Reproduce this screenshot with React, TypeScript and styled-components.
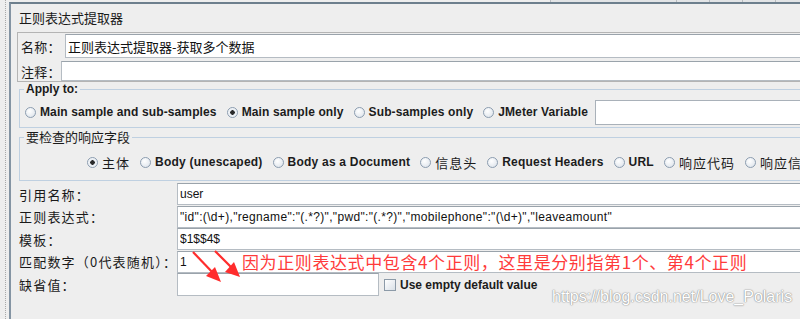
import React from 'react';
import styled, { createGlobalStyle } from 'styled-components';

const GlobalStyle = createGlobalStyle`
html, body {
    margin: 0;
    padding: 0;
    background: #eeeeee;
}
body {
    font-family: "Liberation Sans", Arial, "Noto Sans CJK SC", sans-serif;
    color: #1c1c1c;
}
`;

const cjk = `"Noto Sans CJK SC", "Liberation Sans", sans-serif`;

const applyOptions = [
    { label: 'Main sample and sub-samples', checked: false },
    { label: 'Main sample only', checked: true },
    { label: 'Sub-samples only', checked: false },
    { label: 'JMeter Variable', checked: false },
];

const fieldOptions = [
    { label: '主体', checked: true, cn: true },
    { label: 'Body (unescaped)', checked: false },
    { label: 'Body as a Document', checked: false },
    { label: '信息头', checked: false, cn: true },
    { label: 'Request Headers', checked: false },
    { label: 'URL', checked: false },
    { label: '响应代码', checked: false, cn: true },
    { label: '响应信息', checked: false, cn: true },
];

const RegexExtractor: React.FC = () => {
    return <Page>
        <GlobalStyle />
        <Gutter />
        <Main>
            <TopStrip>
                <Tab $w={125} />
                <Tab $w={32} />
                <Tab $w={32} />
                <Tab $w={32} />
                <Tab $w={40} />
            </TopStrip>
            <Panel>
                <Title>正则表达式提取器</Title>
                <NameBox>
                    <NameRow $h={24}>
                        <NameLabel $w={47}>名称：</NameLabel>
                        <TextInput $cn readOnly defaultValue="正则表达式提取器-获取多个数据" />
                    </NameRow>
                    <NameRow $h={20}>
                        <NameLabel $w={43}>注释：</NameLabel>
                        <TextInput readOnly defaultValue="" />
                    </NameRow>
                </NameBox>

                <Group>
                    <Legend>Apply to:</Legend>
                    <RadioRow $h={26}>
                        {applyOptions.map(o => (
                            <RadioItem key={o.label}>
                                <Radio $checked={o.checked} />
                                <RadioText>{o.label}</RadioText>
                            </RadioItem>
                        ))}
                        <VarInput readOnly defaultValue="" />
                    </RadioRow>
                </Group>

                <Group $second>
                    <Legend $cn>要检查的响应字段</Legend>
                    <RadioRow $h={22} $indent={62}>
                        {fieldOptions.map(o => (
                            <RadioItem key={o.label}>
                                <Radio $checked={o.checked} />
                                <RadioText $cn={o.cn} $wide>{o.label}</RadioText>
                            </RadioItem>
                        ))}
                    </RadioRow>
                </Group>

                <Form>
                    <Label>引用名称：</Label>
                    <TextInput readOnly defaultValue="user" />
                    <Label>正则表达式：</Label>
                    <TextInput $spread readOnly defaultValue={'"id":(\\d+),"regname":"(.*?)","pwd":"(.*?)","mobilephone":"(\\d+)","leaveamount"'} />
                    <Label>模板：</Label>
                    <TextInput readOnly defaultValue="$1$$4$" />
                    <Label>匹配数字（0代表随机）：</Label>
                    <TextInput readOnly defaultValue="1" />
                    <Label>缺省值：</Label>
                    <DefaultCell>
                        <ShortInput readOnly defaultValue="" />
                        <Check />
                        <CheckText>Use empty default value</CheckText>
                    </DefaultCell>
                </Form>
            </Panel>
        </Main>

        <Arrows width="80" height="50" viewBox="0 0 80 50">
            <line x1="3" y1="3" x2="24" y2="25" stroke="#ff2d2d" strokeWidth="2.2" />
            <polygon points="31,33 16,27 25,18" fill="#ff2d2d" />
            <line x1="25" y1="2" x2="43" y2="20" stroke="#ff2d2d" strokeWidth="2.2" />
            <polygon points="50,28 35,23 44,13" fill="#ff2d2d" />
        </Arrows>
        <Note>因为正则表达式中包含4个正则，这里是分别指第1个、第4个正则</Note>
        <Watermark>https://blog.csdn.net/Love_Polaris</Watermark>
    </Page>
};

const Page = styled.div`
position: relative;
display: flex;
width: 800px;
height: 319px;
overflow: hidden;
background: #eeeeee;
`

const Gutter = styled.div`
width: 5px;
flex: none;
border-right: 1px dotted #a9a9a9;
margin-right: 3px;
`

const Main = styled.div`
flex: 1;
display: flex;
flex-direction: column;
margin-right: -6px;
`

const TopStrip = styled.div`
height: 2px;
display: flex;
justify-content: flex-end;
`

const Tab = styled.div<{ $w: number }>`
width: ${p => p.$w}px;
border-left: 1px solid #b8bcc0;
background: #e2e4e6;
`

const Panel = styled.div`
flex: 1;
border-left: 2px solid #8494a3;
border-top: 2px solid #6d7f8d;
padding-left: 6px;
`

const Title = styled.div`
height: 28px;
line-height: 28px;
padding-left: 2px;
font-family: ${cjk};
font-size: 13px;
color: #1a1a1a;
`

const NameBox = styled.div`
border: 1px solid #b4b4b4;
border-right: none;
padding: 1px 0 0 0;
display: flex;
flex-direction: column;
gap: 3px;
`

const NameRow = styled.div<{ $h: number }>`
display: flex;
height: ${p => p.$h}px;
align-items: stretch;
`

const NameLabel = styled.span<{ $w: number }>`
flex: none;
width: ${p => p.$w}px;
box-sizing: border-box;
padding-left: 3px;
font-family: ${cjk};
font-size: 13px;
letter-spacing: 0.3px;
white-space: nowrap;
display: flex;
align-items: center;
`

const TextInput = styled.input<{ $cn?: boolean; $spread?: boolean }>`
flex: 1;
min-width: 0;
width: 100%;
height: 100%;
box-sizing: border-box;
margin: 0;
padding: 0 2px;
border: 1px solid #b5bcc3;
border-top-color: #9aa3ab;
background: #ffffff;
font-family: ${p => p.$cn ? cjk : `"Liberation Sans", Arial, sans-serif`};
font-size: ${p => p.$cn ? 13 : 12}px;
letter-spacing: ${p => p.$spread ? '0.33px' : 'normal'};
color: #111;
outline: none;
`

const Group = styled.fieldset<{ $second?: boolean }>`
margin: ${p => p.$second ? '1px' : '0'} 0 0 2px;
padding: ${p => p.$second ? '6px 0 7px 5px' : '3px 0 2px 5px'};
border: 1px solid #bfd0e1;
border-right: none;
min-width: 0;
`

const Legend = styled.legend<{ $cn?: boolean }>`
margin-left: -1px;
padding: 0 2px;
font-family: ${p => p.$cn ? cjk : `"Liberation Sans", Arial, sans-serif`};
font-size: ${p => p.$cn ? 13 : 12}px;
font-weight: ${p => p.$cn ? 400 : 700};
line-height: ${p => p.$cn ? 16 : 14}px;
color: #1a1a1a;
`

const RadioRow = styled.div<{ $h: number; $indent?: number }>`
display: flex;
align-items: center;
gap: 10px;
height: ${p => p.$h}px;
padding-left: ${p => p.$indent || 0}px;
white-space: nowrap;
`

const RadioItem = styled.label`
display: flex;
align-items: center;
gap: 4px;
flex: none;
`

const Radio = styled.span<{ $checked: boolean }>`
width: 9px;
height: 9px;
border-radius: 50%;
border: 1px solid #8c9db0;
background: ${p => p.$checked
    ? 'radial-gradient(circle, #2a2a2a 0 2px, #e6ebf1 2.5px, #ffffff 100%)'
    : 'radial-gradient(circle at 40% 35%, #ffffff 0%, #e4e9ef 70%, #cfd7e0 100%)'};
`

const RadioText = styled.span<{ $cn?: boolean; $wide?: boolean }>`
font-family: ${p => p.$cn ? cjk : `"Liberation Sans", Arial, sans-serif`};
font-size: ${p => p.$cn ? 13 : 12}px;
font-weight: ${p => p.$cn ? 400 : 700};
letter-spacing: ${p => p.$cn ? 1 : p.$wide ? 0.22 : 0.12}px;
color: #1c1c1c;
`

const VarInput = styled.input`
flex: 1;
height: 25px;
box-sizing: border-box;
margin: 0 0 0 -3px;
border: 1px solid #a9b1b9;
background: #fff;
outline: none;
`

const Form = styled.div`
margin-top: 2px;
padding-left: 2px;
display: grid;
grid-template-columns: 158px 1fr;
grid-auto-rows: 22px;
row-gap: 0.6px;
`

const Label = styled.div`
display: flex;
align-items: center;
font-family: ${cjk};
font-size: 13px;
letter-spacing: 1.2px;
color: #1a1a1a;
white-space: nowrap;
`

const DefaultCell = styled.div`
display: flex;
align-items: center;
height: 23px;
`

const ShortInput = styled(TextInput)`
flex: none;
width: 202px;
`

const Check = styled.span`
width: 10px;
height: 10px;
margin-left: 5px;
border: 1px solid #8c9aa8;
background: linear-gradient(135deg, #ffffff, #d9e0e7);
`

const CheckText = styled.span`
margin-left: 4px;
font-size: 12px;
font-weight: 700;
color: #1c1c1c;
`

const Arrows = styled.svg`
position: absolute;
left: 190px;
top: 249px;
`

const Note = styled.div`
position: absolute;
left: 242px;
top: 251px;
font-family: ${cjk};
font-size: 17px;
line-height: 22px;
letter-spacing: 0.6px;
color: #ff3b3b;
white-space: nowrap;
`

const Watermark = styled.div`
position: absolute;
left: 552px;
top: 288px;
font-family: "Liberation Sans", Arial, sans-serif;
font-size: 16px;
color: #ffffff;
text-shadow: 0 0 1px #8f8f8f, 0 0 1px #9a9a9a, 0 0 2px #b8b8b8;
white-space: nowrap;
`

export default RegexExtractor;
